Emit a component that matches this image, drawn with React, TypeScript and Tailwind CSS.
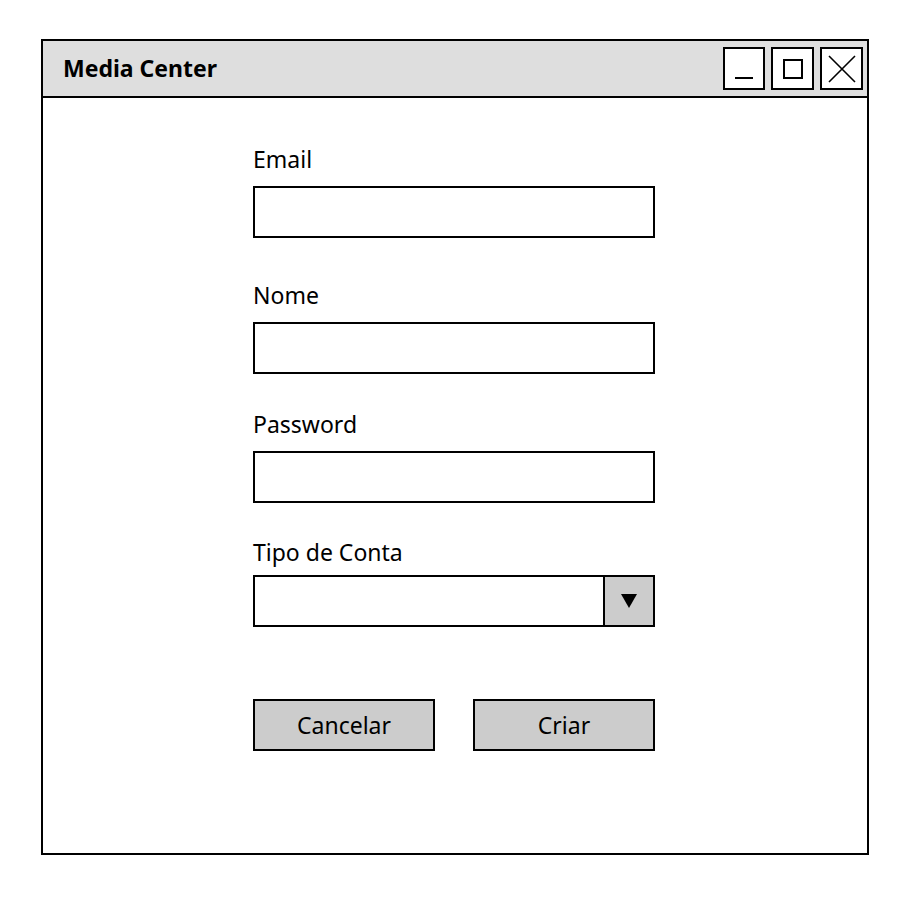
export default function App() {
  const fields = [
    { label: "Email", mt: "mt-[46px]" },
    { label: "Nome", mt: "mt-[42px]" },
    { label: "Password", mt: "mt-[35px]" },
  ];

  return (
    <div className="min-h-[902px] w-[912px] bg-white pl-[41px] pt-[39px] font-['Comic_Sans_MS','Noto_Sans',sans-serif] text-black">
      <div className="flex h-[816px] w-[828px] flex-col border-2 border-black">
        <div className="flex h-[57px] items-center justify-between border-b-2 border-black bg-[#dedede] pl-[20px] pr-[4px]">
          <span className="text-[23px] font-bold">Media Center</span>
          <div className="flex gap-[6px]">
            <div className="flex h-[43px] w-[42px] items-end justify-center border-2 border-black bg-white pb-[9px]">
              <div className="h-[2px] w-[18px] bg-black" />
            </div>
            <div className="flex h-[43px] w-[43px] items-center justify-center border-2 border-black bg-white">
              <div className="h-[20px] w-[20px] border-2 border-black" />
            </div>
            <div className="flex h-[43px] w-[43px] items-center justify-center border-2 border-black bg-white">
              <svg width="30" height="30" viewBox="0 0 30 30" fill="none" stroke="black" strokeWidth="1.6">
                <path d="M2 2L28 28M28 2L2 28" />
              </svg>
            </div>
          </div>
        </div>

        <div className="flex flex-col pl-[210px]">
          {fields.map((f) => (
            <div key={f.label} className={`flex flex-col ${f.mt}`}>
              <label className="h-[30px] text-[23px] leading-[30px]">{f.label}</label>
              <div className="mt-[12px] h-[52px] w-[402px] border-2 border-black bg-white" />
            </div>
          ))}

          <div className="mt-[34px] flex flex-col">
            <label className="h-[30px] text-[23px] leading-[30px]">Tipo de Conta</label>
            <div className="mt-[8px] flex h-[52px] w-[402px] border-2 border-black bg-white">
              <div className="flex-1" />
              <div className="flex w-[50px] items-center justify-center border-l-2 border-black bg-[#cccccc]">
                <svg width="16" height="14" viewBox="0 0 16 14">
                  <path d="M0 0H16L8 14Z" fill="black" />
                </svg>
              </div>
            </div>
          </div>

          <div className="mt-[72px] flex gap-[38px]">
            <button className="h-[52px] w-[182px] border-2 border-black bg-[#cccccc] text-[23px]">Cancelar</button>
            <button className="h-[52px] w-[182px] border-2 border-black bg-[#cccccc] text-[23px]">Criar</button>
          </div>
        </div>
      </div>
    </div>
  );
}
